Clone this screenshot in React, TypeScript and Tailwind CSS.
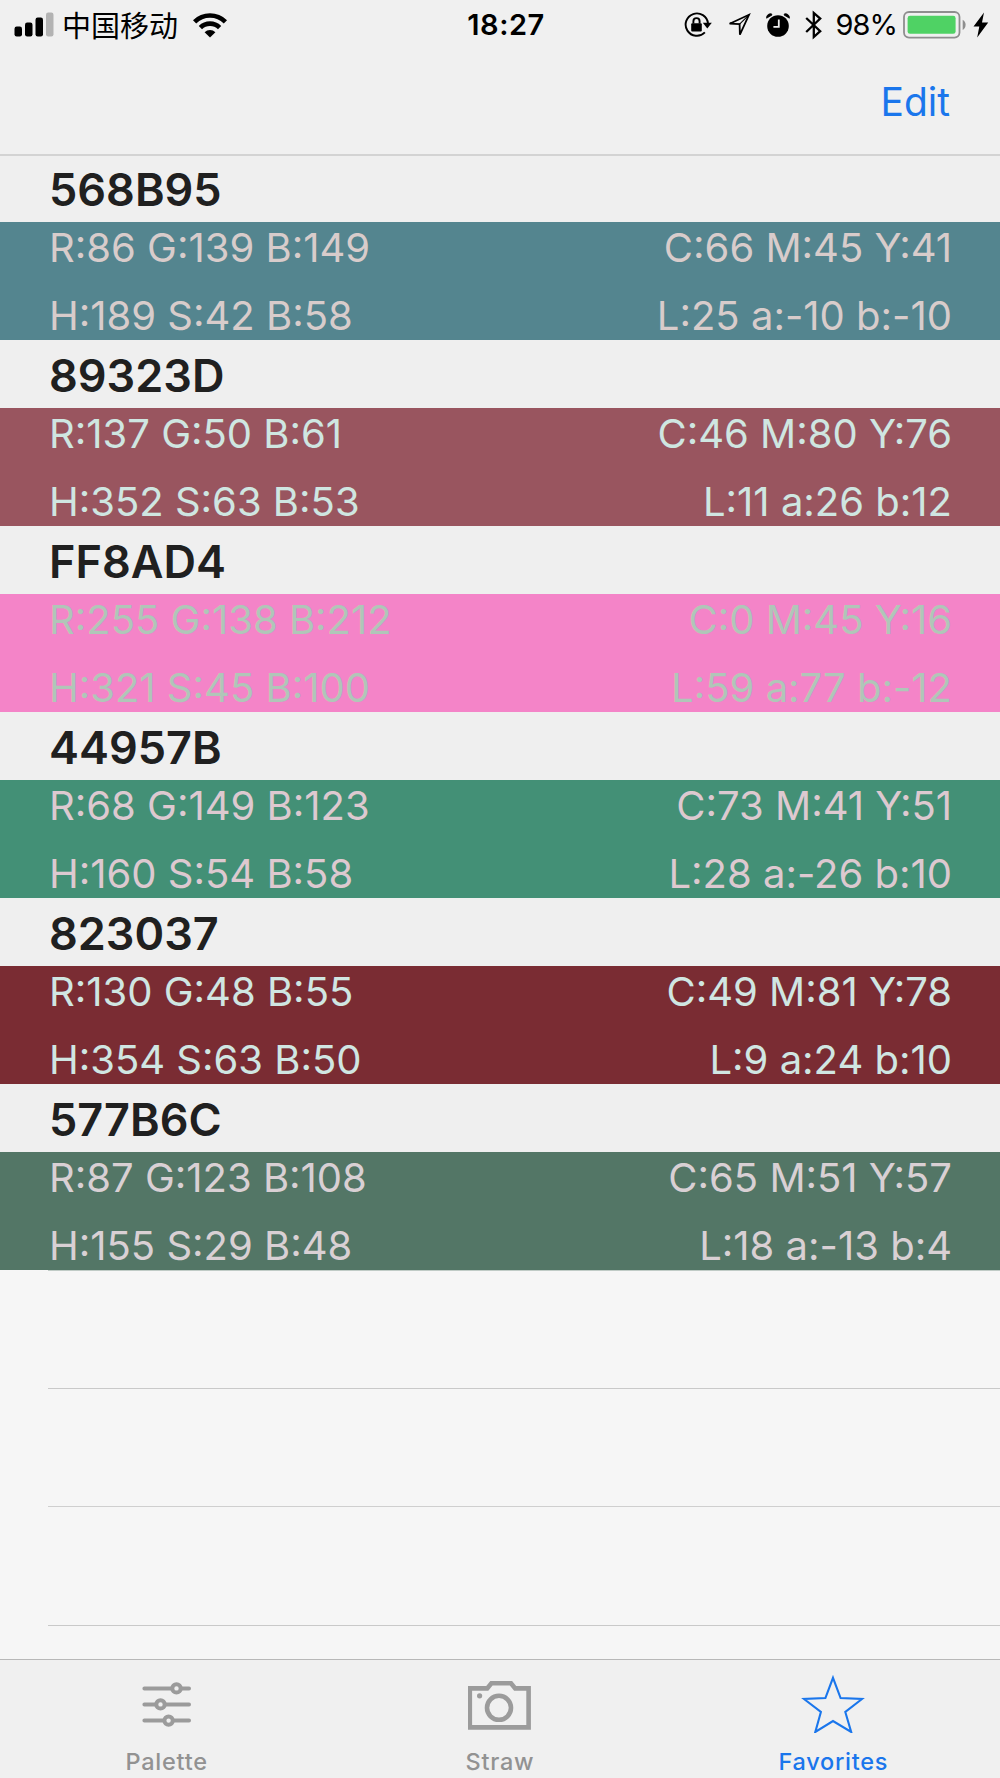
type Swatch = {
  hex: string;
  rgb: string;
  cmy: string;
  hsb: string;
  l: string;
  ab: string;
  colors: string;
};

const swatches: Swatch[] = [
  { hex: '568B95', rgb: 'R:86 G:139 B:149', cmy: 'C:66 M:45 Y:41', hsb: 'H:189 S:42 B:58', l: 'L:25', ab: 'a:-10 b:-10', colors: 'bg-[#54858f] text-[#d8cccb]' },
  { hex: '89323D', rgb: 'R:137 G:50 B:61', cmy: 'C:46 M:80 Y:76', hsb: 'H:352 S:63 B:53', l: 'L:11', ab: 'a:26 b:12', colors: 'bg-[#99555f] text-[#cfe6e1]' },
  { hex: 'FF8AD4', rgb: 'R:255 G:138 B:212', cmy: 'C:0 M:45 Y:16', hsb: 'H:321 S:45 B:100', l: 'L:59', ab: 'a:77 b:-12', colors: 'bg-[#f484c8] text-[#b0c6b8]' },
  { hex: '44957B', rgb: 'R:68 G:149 B:123', cmy: 'C:73 M:41 Y:51', hsb: 'H:160 S:54 B:58', l: 'L:28', ab: 'a:-26 b:10', colors: 'bg-[#439076] text-[#ddc9d0]' },
  { hex: '823037', rgb: 'R:130 G:48 B:55', cmy: 'C:49 M:81 Y:78', hsb: 'H:354 S:63 B:50', l: 'L:9', ab: 'a:24 b:10', colors: 'bg-[#7a2c33] text-[#d0e6e2]' },
  { hex: '577B6C', rgb: 'R:87 G:123 B:108', cmy: 'C:65 M:51 Y:57', hsb: 'H:155 S:29 B:48', l: 'L:18', ab: 'a:-13 b:4', colors: 'bg-[#537666] text-[#d9d0d4]' },
];

const tabs = ['Palette', 'Straw', 'Favorites'];

function SignalIcon() {
  return (
    <svg className="h-[26px] w-[40px]" viewBox="0 0 40 26">
      <rect x="0.5" y="14.5" width="7.5" height="10" rx="2.2" />
      <rect x="11" y="10.5" width="7.5" height="14" rx="2.2" />
      <rect x="21.5" y="5.5" width="7.5" height="19" rx="2.2" />
      <rect x="32" y="0.5" width="7.5" height="24" rx="2.2" fill="#b3b3b3" />
    </svg>
  );
}

function WifiIcon() {
  return (
    <svg className="h-[25px] w-[34px]" viewBox="0 0 34 25" fill="none" stroke="#000" strokeWidth="4.6">
      <path d="M1.6 8.8a22 22 0 0 1 30.8 0" />
      <path d="M7.4 14.6a13.7 13.7 0 0 1 19.2 0" />
      <path d="M17 24.6l-5.4-5.4a7.7 7.7 0 0 1 10.8 0z" fill="#000" stroke="none" />
    </svg>
  );
}

function RotationLockIcon() {
  return (
    <svg className="h-[26px] w-[28px]" viewBox="0 0 28 26" fill="none" stroke="#000" strokeWidth="1.9">
      <path d="M20.9 20.4A11.2 11.2 0 1 1 24 11.5" />
      <path d="M18.8 10.8h9L23.3 16.4z" fill="#000" stroke="none" />
      <rect x="7.2" y="11.3" width="10.6" height="8.2" rx="1" fill="#000" stroke="none" />
      <path d="M9.4 11.5V9.2a3.1 3.1 0 0 1 6.2 0v2.3" />
    </svg>
  );
}

function LocationIcon() {
  return (
    <svg className="h-[24px] w-[24px]" viewBox="0 0 24 24" fill="none" stroke="#000" strokeWidth="1.8">
      <path d="M22 1.8L2.6 10.7l10 .5.3 10.4z" />
      <path d="M22 1.8l-9.4 9.4" strokeWidth="1.1" />
    </svg>
  );
}

function AlarmIcon() {
  return (
    <svg className="h-[25px] w-[24px]" viewBox="0 0 24 25">
      <circle cx="12" cy="13" r="10.8" />
      <path d="M.6 5.2A4 4 0 0 1 5.4.8L6 2z M23.4 5.2A4 4 0 0 0 18.6.8L18 2z" stroke="#000" strokeWidth="0.8" />
      <path d="M12.8 6.5v7.3H7.4" fill="none" stroke="#efefef" strokeWidth="1.8" />
    </svg>
  );
}

function BluetoothIcon() {
  return (
    <svg className="h-[30px] w-[18px]" viewBox="0 0 18 30" fill="none" stroke="#000" strokeWidth="2.3">
      <path d="M1.2 8l14 13.2L8.8 27V3l6.4 5.6L1.2 22" />
    </svg>
  );
}

function BatteryIcon() {
  return (
    <svg className="h-[28px] w-[64px]" viewBox="0 0 64 28">
      <rect x="1" y="1" width="55.5" height="25.6" rx="5" fill="none" stroke="#8e8e8e" strokeWidth="1.8" />
      <rect x="4.6" y="4.8" width="48" height="18" rx="2.4" fill="#4fd264" />
      <path d="M59.7 8.8c3.9 2.2 3.9 8 0 10.2z" fill="#8e8e8e" />
    </svg>
  );
}

function BoltIcon() {
  return (
    <svg className="h-[26px] w-[16px]" viewBox="0 0 16 26">
      <path d="M11 .5L.5 14.6h5.8L4.2 25.5 15.2 10.6H9z" />
    </svg>
  );
}

function StatusBar() {
  return (
    <div className="flex h-[50px] items-center leading-[50px]">
      <div className="flex flex-1 items-center pl-[14px]">
        <SignalIcon />
        <span className="mr-[15px] -mt-[2px] ml-[8px] font-['Noto_Sans_CJK_SC'] text-[29px]">中国移动</span>
        <WifiIcon />
      </div>
      <span className="pl-[9px] text-[29px] font-semibold tracking-[0.5px]">18:27</span>
      <div className="flex flex-1 items-center justify-end pr-[11px]">
        <div className="flex items-center gap-[15px]">
          <RotationLockIcon />
          <LocationIcon />
          <AlarmIcon />
          <BluetoothIcon />
        </div>
        <span className="mr-[6px] ml-[13px] text-[29px] tracking-[-1px]">98%</span>
        <BatteryIcon />
        <span className="ml-[6px]"><BoltIcon /></span>
      </div>
    </div>
  );
}

function TabIcon({ name }: { name: string }) {
  if (name === 'Palette') {
    return (
      <svg className="h-[60px] w-[64px]" viewBox="0 0 64 60" fill="none" stroke="#9b9b9b" strokeWidth="4" strokeLinecap="round">
        <path d="M9.4 15.4h44.6M9.4 31.4h44.6M9.4 47.6h44.6" />
        <g fill="#efefef">
          <circle cx="41.5" cy="15.4" r="4.2" />
          <circle cx="25.5" cy="31.4" r="4.2" />
          <circle cx="33.6" cy="47.6" r="4.2" />
        </g>
      </svg>
    );
  }
  if (name === 'Straw') {
    return (
      <svg className="h-[60px] w-[64px]" viewBox="0 0 64 60" fill="none" stroke="#9b9b9b" strokeWidth="4.6">
        <path d="M1.8 15.4h17.4l4.2-5.2H43l4.2 5.2h13.4v39H1.8z" />
        <circle cx="31" cy="34.8" r="12" />
        <circle cx="11.6" cy="22.8" r="2.6" fill="#9b9b9b" stroke="none" />
      </svg>
    );
  }
  return (
    <svg className="h-[60px] w-[64px]" viewBox="0 0 64 60" fill="none" stroke="#1a76ec" strokeWidth="2.1">
      <path d="M32 4.8l7.6 20.3 21.4.9-16.7 13L50.2 59 32 48 14.3 59l5.6-20L3 26l21.4-.9z" />
    </svg>
  );
}

function SwatchRow({ swatch }: { swatch: Swatch }) {
  return (
    <section>
      <h2 className="h-[68px] bg-[#efefef] pl-[49px] text-[45px] leading-[71px] font-semibold text-[#202020]">
        {swatch.hex}
      </h2>
      <div className={`flex h-[118px] justify-between pt-px pr-[48px] pl-[49px] text-[40px] leading-[50px] ${swatch.colors}`}>
        <div className="flex flex-col gap-[18px] [font-feature-settings:'case']">
          <span>{swatch.rgb}</span>
          <span>{swatch.hsb}</span>
        </div>
        <div className="flex flex-col gap-[18px] text-right">
          <span className="[font-feature-settings:'case']">{swatch.cmy}</span>
          <span>
            <span className="[font-feature-settings:'case']">{swatch.l}</span> {swatch.ab}
          </span>
        </div>
      </div>
    </section>
  );
}

export default function App() {
  return (
    <div className="flex h-[1778px] w-[1000px] flex-col overflow-hidden bg-[#f6f6f6] font-['Inter','Noto_Sans_CJK_SC',sans-serif]">
      <header className="relative h-[156px] border-b-2 border-[#d3d3d3] bg-[#f0f0f0] text-black">
        <StatusBar />
        <div className="flex justify-end pr-[50px]">
          <button className="text-[39px] leading-[104px] text-[#1a76ec]">Edit</button>
        </div>
      </header>

      <main className="-mt-[2px] min-h-0 flex-1 overflow-hidden">
        {swatches.map((s) => (
          <SwatchRow key={s.hex} swatch={s} />
        ))}
        <div className="ml-[48px] h-[118px] border-t border-[#c0cbc6]" />
        <div className="ml-[48px] h-[118px] border-t border-[#c9c9c9]" />
        <div className="ml-[48px] h-[119px] border-t border-[#cfcfcf]" />
        <div className="ml-[48px] border-t border-[#c9c9c9]" />
      </main>

      <nav className="grid h-[119px] grid-cols-3 border-t border-[#b8b8b8] bg-[#f0f0f0]">
        {tabs.map((name) => (
          <a
            key={name}
            className={`flex flex-col items-center gap-[11px] pt-[13px] text-[23.5px] leading-[36px] font-medium tracking-[0.75px] ${name === 'Favorites' ? 'text-[#1a76ec]' : 'text-[#929292]'}`}
          >
            <TabIcon name={name} />
            {name}
          </a>
        ))}
      </nav>
    </div>
  );
}
